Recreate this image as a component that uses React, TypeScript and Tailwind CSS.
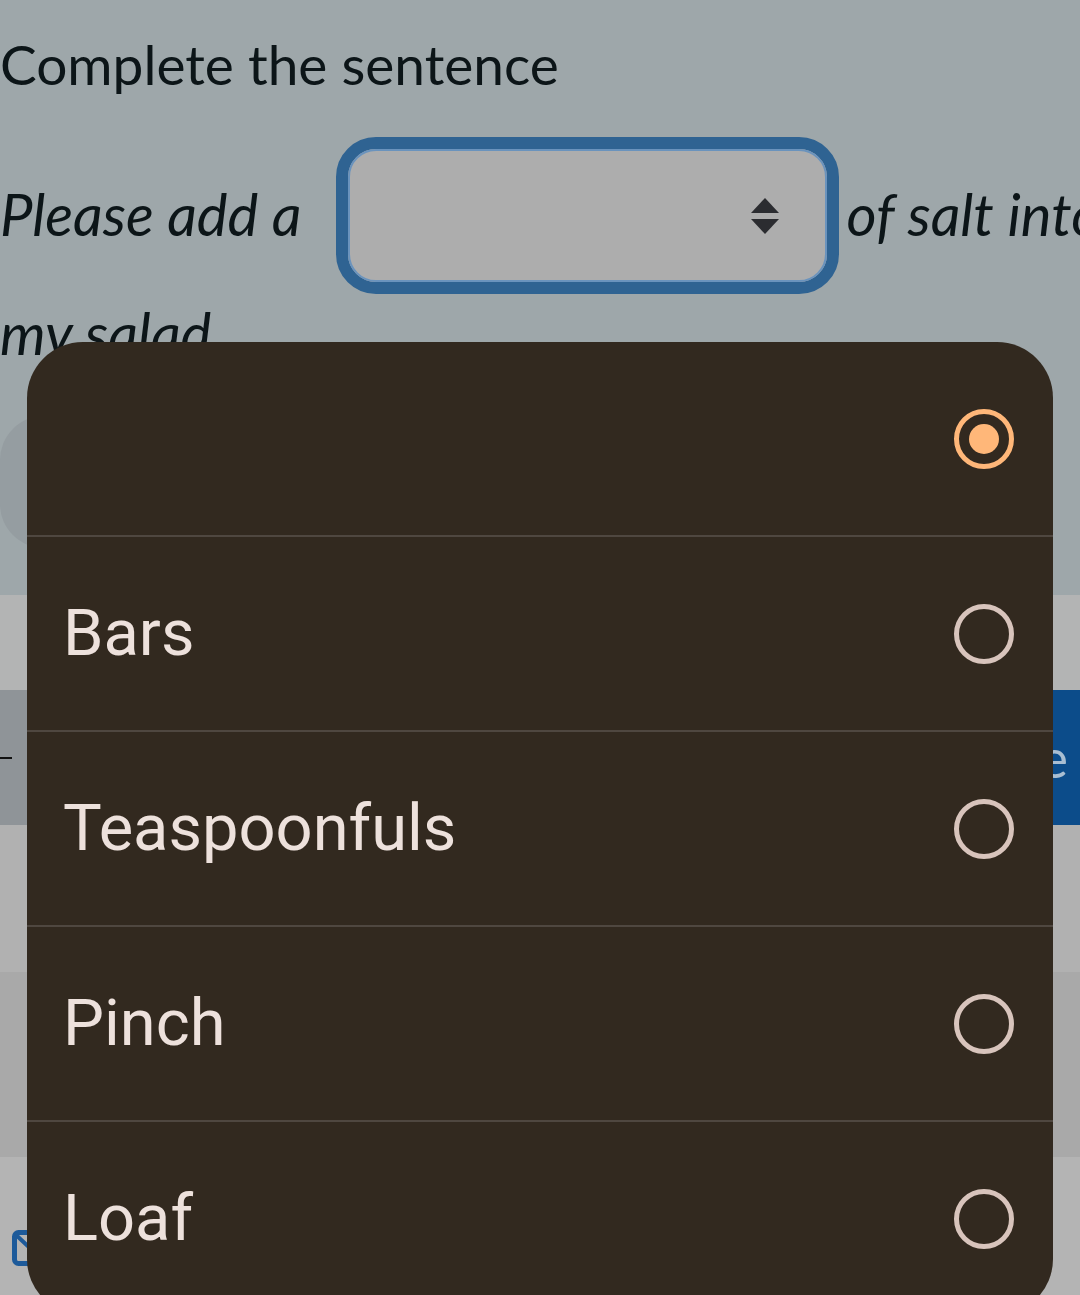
import React from 'react';

const options = ['', 'Bars', 'Teaspoonfuls', 'Pinch', 'Loaf'];

function Radio({ checked }: { checked: boolean }) {
  if (checked) {
    return <span className="flex items-center justify-center w-[60px] h-[60px] rounded-full border-[5px] border-[#ffb779]">
        <span className="w-[30px] h-[30px] rounded-full bg-[#ffb779]" />
      </span>;
  }
  return <span className="block w-[60px] h-[60px] rounded-full border-[5px] border-[#d8c4bc]" />;
}

function OptionSheet() {
  return <div className="absolute left-[27px] top-[342px] w-[1026px] rounded-[56px] bg-[#32291f] overflow-hidden font-['Roboto',sans-serif]">
      {options.map((opt, i) => <div key={i} className={i === 0 ? 'flex items-center justify-between h-[193px] pl-[36px] pr-[39px]' : 'flex items-center justify-between h-[195px] pl-[36px] pr-[39px] border-t-2 border-[#4f4740]'}>
          <span className="text-[65px] leading-none text-[#ede1dc]">{opt}</span>
          <Radio checked={i === 0} />
        </div>)}
    </div>;
}

export default function App() {
  return <div className="relative w-[1080px] h-[1295px] overflow-hidden bg-[#b4b4b4] font-['Lato',sans-serif]">
      {/* dimmed question area */}
      <section className="h-[595px] bg-[#9ea7aa] text-[#0c1518]">
        <h1 className="pt-[34px] text-[55px] leading-[60px] whitespace-nowrap">
          Complete the sentence
        </h1>

        <div className="mt-[43px] flex items-center whitespace-nowrap italic text-[58px] leading-none">
          <span className="-mt-[4px]">Please add a</span>
          <div className="ml-[35px] w-[503px] h-[157px] shrink-0 rounded-[40px] border-[12px] border-[#2f6392] bg-[#adadad]">
            <div className="h-full flex items-center justify-end pr-[45px] rounded-[28px] border-2 border-[#6a93bd]">
              <svg width="30" height="40" viewBox="0 0 30 40">
                <path d="M15 2 L29 17 L1 17 Z" fill="#2b2c30" />
                <path d="M15 38 L29 23 L1 23 Z" fill="#2b2c30" />
              </svg>
            </div>
          </div>
          <span className="ml-[7px] -mt-[4px]">of salt into</span>
        </div>

        <p className="mt-[8px] italic text-[58px] leading-[62px]">my salad</p>

        <div className="mt-[52px] w-[120px] h-[132px] rounded-[44px] bg-[#959da1]" />
      </section>

      <div className="h-[95px] bg-[#b3b4b4]" />

      {/* footer buttons */}
      <div className="flex h-[135px]">
        <div className="w-[520px] flex items-center bg-[#8f9498]">
          <span className="block w-[12px] h-[2px] bg-[#111]" />
        </div>
        <div className="flex-1 flex items-center justify-end pr-[12px] bg-[#0c4c8a] text-[#a9bed2] text-[54px]">
          Continue
        </div>
      </div>

      <div className="h-[147px] bg-[#b1b1b1]" />
      <div className="h-[185px] bg-[#a9a9a9]" />
      <div className="pt-[73px] pl-[12px]">
        <svg width="40" height="36" viewBox="0 0 40 36">
          <rect x="2.5" y="2.5" width="35" height="31" rx="4" fill="none" stroke="#1d5a9a" strokeWidth="5" />
          <path d="M3 4 L20 20 L37 4" fill="none" stroke="#1d5a9a" strokeWidth="4" />
        </svg>
      </div>

      <OptionSheet />
    </div>;
}
